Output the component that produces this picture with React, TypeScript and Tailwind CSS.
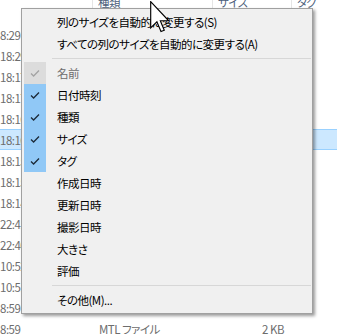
import React from 'react';

const rows = [
  { time: '8:29', type: 'OBJ ファイル', size: '1,204 KB' },
  { time: '18:29', type: 'PNG ファイル', size: '312 KB' },
  { time: '18:17', type: 'PNG ファイル', size: '298 KB' },
  { time: '18:17', type: 'PNG ファイル', size: '301 KB' },
  { time: '18:16', type: 'PNG ファイル', size: '287 KB' },
  { time: '18:16', type: 'PNG ファイル', size: '290 KB', selected: true },
  { time: '18:15', type: 'PNG ファイル', size: '276 KB' },
  { time: '18:15', type: 'PNG ファイル', size: '281 KB' },
  { time: '18:14', type: 'PNG ファイル', size: '265 KB' },
  { time: '22:41', type: 'JPG ファイル', size: '88 KB' },
  { time: '22:40', type: 'JPG ファイル', size: '91 KB' },
  { time: '10:52', type: 'テキスト ドキュメント', size: '3 KB' },
  { time: '10:51', type: 'テキスト ドキュメント', size: '3 KB' },
  { time: '8:59', type: 'OBJ ファイル', size: '540 KB' },
  { time: '8:59', type: 'MTL ファイル', size: '2 KB' },
];

const items = [
  { label: '名前', state: 'disabled' },
  { label: '日付時刻', state: 'checked' },
  { label: '種類', state: 'checked' },
  { label: 'サイズ', state: 'checked' },
  { label: 'タグ', state: 'checked' },
  { label: '作成日時' },
  { label: '更新日時' },
  { label: '撮影日時' },
  { label: '大きさ' },
  { label: '評価' },
];

function Check({ color }: { color: string }) {
  return (
    <svg width="22" height="22" viewBox="0 0 22 22">
      <polyline points="7,11.5 9.6,14 15,8.5" fill="none" stroke={color} strokeWidth="1.3" />
    </svg>
  );
}

function MenuItem({ label, state }: { label: string; state?: string }) {
  return (
    <div className="flex h-[22px] items-center pl-[2px]">
      {state === 'checked' ? (
        <div className="h-[22px] w-[22px] bg-[#90c8f6]">
          <Check color="#1c2a38" />
        </div>
      ) : state === 'disabled' ? (
        <div className="h-[22px] w-[22px] bg-[#dcdcdc]">
          <Check color="#a3a3a3" />
        </div>
      ) : (
        <div className="h-[22px] w-[22px]" />
      )}
      <span className={`ml-[11px] whitespace-nowrap ${state === 'disabled' ? 'text-[#6d6d6d]' : 'text-black'}`}>
        {label}
      </span>
    </div>
  );
}

function Separator() {
  return (
    <div className="h-[7px] pt-[3px] pl-[30px] pr-[1px]">
      <div className="h-px bg-[#d7d7d7]" />
    </div>
  );
}

export default function App() {
  return (
    <div className="relative h-[334px] w-[337px] overflow-hidden bg-white text-[11.5px] leading-[12px] tracking-[-0.5px] font-[family-name:'Noto_Sans_CJK_JP',sans-serif] [font-feature-settings:'palt']">
      {/* Column header (scrolled mostly out of view) */}
      <div className="flex h-[9px] overflow-hidden text-[#4c607a]">
        <div className="w-[92px]" />
        <div className="w-[120px] border-l border-[#e5e5e5] pl-[5px]">
          <div className="-mt-[4px]">種類</div>
        </div>
        <div className="w-[79px] border-l border-[#e5e5e5] pl-[5px]">
          <div className="-mt-[4px]">サイズ</div>
        </div>
        <div className="flex-1 border-l border-[#e5e5e5] pl-[5px]">
          <div className="-mt-[4px]">タグ</div>
        </div>
      </div>

      {/* File rows */}
      <div className="pt-[15px] text-[#6d6d6d]">
        {rows.map((r, i) => (
          <div
            key={i}
            className={`flex h-[21px] items-center ${r.selected ? 'border-y border-[#99d1ff] bg-[#cce8ff]' : ''}`}
          >
            <div className="w-[92px] whitespace-nowrap">{r.time}</div>
            <div className="w-[120px] whitespace-nowrap pl-[7px]">{r.type}</div>
            <div className="w-[79px] whitespace-nowrap pr-[7px] text-right">{r.size}</div>
            <div className="flex-1" />
          </div>
        ))}
      </div>

      {/* Context menu */}
      <div className="absolute left-[21px] top-[8px] h-[306px] w-[292px] border border-[#a0a0a0] bg-[#f0f0f0] py-[2px] shadow-[2px_2px_3px_rgba(0,0,0,0.4)]">
        <MenuItem label="列のサイズを自動的に変更する(S)" />
        <MenuItem label="すべての列のサイズを自動的に変更する(A)" />
        <Separator />
        {items.map((it) => (
          <MenuItem key={it.label} label={it.label} state={it.state} />
        ))}
        <Separator />
        <MenuItem label="その他(M)..." />
      </div>

      {/* Mouse pointer */}
      <svg className="absolute left-[150px] top-[1px]" width="21" height="33" viewBox="-0.4 -0.4 12.8 20.2">
        <path
          d="M0,0 L0,16 L3.8,12.3 L6.3,18.3 L8.3,17.5 L5.9,11.7 L11,11.7 Z"
          fill="#fff"
          stroke="#000"
          strokeWidth="0.7"
          strokeLinejoin="miter"
        />
      </svg>
    </div>
  );
}
